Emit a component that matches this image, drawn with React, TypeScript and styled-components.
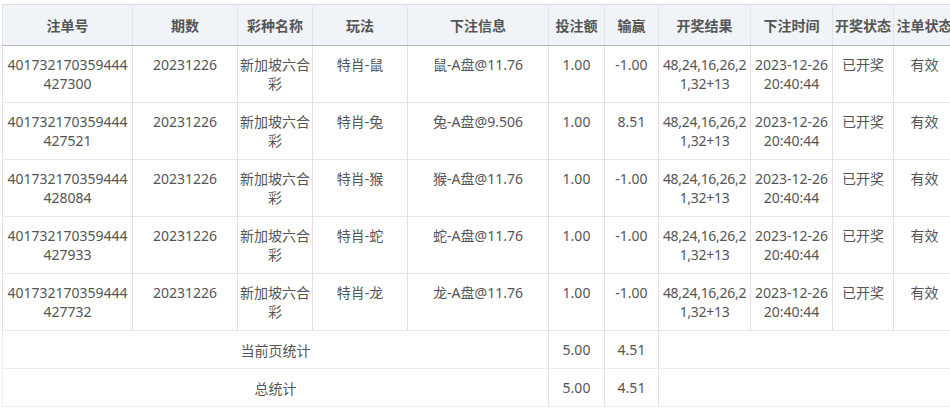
import React from 'react';
import styled, { createGlobalStyle } from 'styled-components';

const GlobalStyle = createGlobalStyle`
  html, body {
    margin: 0;
    padding: 0;
    background: #fff;
    overflow: hidden;
  }
  body {
    font-family: "Noto Sans", "Noto Sans CJK SC", sans-serif;
  }
`;

const Wrap = styled.div`
  padding: 4px 0 0 2px;
  width: 960px;
`;

const Table = styled.table`
  border-collapse: collapse;
  table-layout: fixed;
  width: 953px;
  border: 1px solid #dcdcdc;
  font-size: 14px;
  color: #555;
`;

const HeadCell = styled.th`
  height: 40px;
  padding: 0 2px;
  background: #f0f3f7;
  border-left: 1px solid #e2e6eb;
  border-bottom: 1px solid #b4b4b4;
  font-weight: bold;
  color: #555;
  text-align: center;
  white-space: nowrap;
  overflow: hidden;
`;

const Cell = styled.td`
  height: 57px;
  padding: 9px 2px 0;
  box-sizing: border-box;
  vertical-align: top;
  text-align: center;
  line-height: 19px;
  word-break: break-all;
  border-left: 1px solid #ecdcde;
  border-bottom: 1px solid #e6e6e6;
`;

const ResultCell = styled(Cell)`
  padding: 9px 0 0;
  letter-spacing: -0.3px;
`;

const TimeCell = styled(Cell)`
  word-break: normal;
`;

const SumCell = styled.td<{ $open?: boolean }>`
  height: 37px;
  padding: 0 2px;
  text-align: center;
  vertical-align: middle;
  border-bottom: 1px solid #ececec;
  border-left: 1px solid ${(p) => (p.$open ? '#ececec' : '#ecdcde')};
`;

const widths = [130, 105, 75, 95, 141, 56, 54, 92, 82, 61, 62];
const heads = ['注单号', '期数', '彩种名称', '玩法', '下注信息', '投注额', '输赢', '开奖结果', '下注时间', '开奖状态', '注单状态'];

const rows = [
  { id: '401732170359444427300', zodiac: '鼠', odds: '11.76', win: '-1.00' },
  { id: '401732170359444427521', zodiac: '兔', odds: '9.506', win: '8.51' },
  { id: '401732170359444428084', zodiac: '猴', odds: '11.76', win: '-1.00' },
  { id: '401732170359444427933', zodiac: '蛇', odds: '11.76', win: '-1.00' },
  { id: '401732170359444427732', zodiac: '龙', odds: '11.76', win: '-1.00' },
];

export default function App() {
  return (
    <Wrap>
      <GlobalStyle />
      <Table>
        <colgroup>
          {widths.map((w, i) => (
            <col key={i} style={{ width: w }} />
          ))}
        </colgroup>
        <thead>
          <tr>
            {heads.map((h) => (
              <HeadCell key={h}>{h}</HeadCell>
            ))}
          </tr>
        </thead>
        <tbody>
          {rows.map((r) => (
            <tr key={r.id}>
              <Cell>{r.id}</Cell>
              <Cell>20231226</Cell>
              <Cell>新加坡六合彩</Cell>
              <Cell>特肖-{r.zodiac}</Cell>
              <Cell>{r.zodiac}-A盘@{r.odds}</Cell>
              <Cell>1.00</Cell>
              <Cell>{r.win}</Cell>
              <ResultCell>48,24,16,26,2&#8203;1,32+13</ResultCell>
              <TimeCell>2023-12-26 20:40:44</TimeCell>
              <Cell>已开奖</Cell>
              <Cell>有效</Cell>
            </tr>
          ))}
          <tr>
            <SumCell colSpan={5} $open>当前页统计</SumCell>
            <SumCell>5.00</SumCell>
            <SumCell>4.51</SumCell>
            <SumCell colSpan={4} />
          </tr>
          <tr>
            <SumCell colSpan={5} $open>总统计</SumCell>
            <SumCell>5.00</SumCell>
            <SumCell>4.51</SumCell>
            <SumCell colSpan={4} />
          </tr>
        </tbody>
      </Table>
    </Wrap>
  );
}
